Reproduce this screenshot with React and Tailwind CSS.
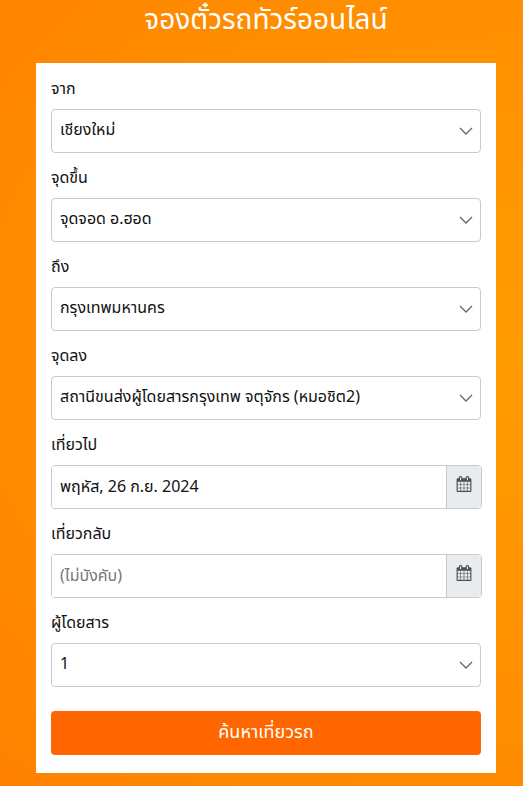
import { useState } from "react";

const CALENDAR_PATH =
  "M192 1664h288v-288h-288v288zm352 0h320v-288h-320v288zm-352-352h288v-320h-288v320zm352 0h320v-320h-320v320zm-352-384h288v-288h-288v288zm736 736h320v-288h-320v288zm-384-736h320v-288h-320v288zm768 736h288v-288h-288v288zm-384-352h320v-320h-320v320zm-352-864v-288q0-13-9.5-22.5t-22.5-9.5h-64q-13 0-22.5 9.5t-9.5 22.5v288q0 13 9.5 22.5t22.5 9.5h64q13 0 22.5-9.5t9.5-22.5zm736 864h288v-320h-288v320zm-384-384h320v-288h-320v288zm384 0h288v-288h-288v288zm32-480v-288q0-13-9.5-22.5t-22.5-9.5h-64q-13 0-22.5 9.5t-9.5 22.5v288q0 13 9.5 22.5t22.5 9.5h64q13 0 22.5-9.5t9.5-22.5zm384-64v1280q0 52-38 90t-90 38h-1408q-52 0-90-38t-38-90v-1280q0-52 38-90t90-38h128v-96q0-66 47-113t113-47h64q66 0 113 47t47 113v96h384v-96q0-66 47-113t113-47h64q66 0 113 47t47 113v96h128q52 0 90 38t38 90z";

const Field = ({ id, label, children }) => (
  <div>
    <label htmlFor={id} className="block text-base leading-6 mb-2">
      {label}
    </label>
    {children}
  </div>
);

const SelectField = ({ id, label, options }) => (
  <Field id={id} label={label}>
    <div className="grid items-center">
      <select
        id={id}
        className="col-start-1 row-start-1 w-full h-11 appearance-none rounded border border-[#c8cacc] bg-white pl-2 pr-8 pb-0.5 text-base"
      >
        {options.map((option) => (
          <option key={option}>{option}</option>
        ))}
      </select>
      <svg
        viewBox="0 0 14 8"
        className="col-start-1 row-start-1 justify-self-end mr-2 w-3.5 h-2 pointer-events-none"
        fill="none"
        stroke="#666"
        strokeWidth="1.3"
      >
        <path d="M1 1l6 6 6-6" />
      </svg>
    </div>
  </Field>
);

const DateField = ({ id, label, initial, placeholder }) => {
  const [value, setValue] = useState(initial);

  return (
    <Field id={id} label={label}>
      <div className="-mr-px flex h-11 rounded border border-[#c8cacc] overflow-hidden">
        <input
          id={id}
          type="text"
          value={value}
          placeholder={placeholder}
          onChange={(e) => setValue(e.target.value)}
          className="min-w-0 flex-1 bg-white px-2 text-base placeholder:text-[#737980]"
        />
        <button
          type="button"
          aria-label={`เลือก${label}`}
          className="flex w-[35px] justify-center border-l border-[#c8cacc] bg-[#e9ecef] pt-2.5"
        >
          <svg viewBox="0 0 1792 1792" className="w-4 h-4" fill="#495057">
            <path d={CALENDAR_PATH} />
          </svg>
        </button>
      </div>
    </Field>
  );
};

const App = () => {
  return (
    <main className="min-h-screen bg-[radial-gradient(ellipse_at_100%_45%,#ff9c00_0%,#ff8e00_60%,#ff8200_100%)] pl-9 pr-[27px] pb-3 font-['Noto_Sans_Thai','Noto_Sans',sans-serif] text-[#111]">
      <h1 className="h-[63px] text-center text-[28px] leading-[42px] text-white">
        จองตั๋วรถทัวร์ออนไลน์
      </h1>
      <form
        className="bg-white px-[15px] pt-3.5 pb-[18px]"
        onSubmit={(e) => e.preventDefault()}
      >
        <div className="flex flex-col gap-[13px]">
          <SelectField id="from" label="จาก" options={["เชียงใหม่"]} />
          <SelectField id="pickup" label="จุดขึ้น" options={["จุดจอด อ.ฮอด"]} />
          <SelectField id="to" label="ถึง" options={["กรุงเทพมหานคร"]} />
          <SelectField
            id="dropoff"
            label="จุดลง"
            options={["สถานีขนส่งผู้โดยสารกรุงเทพ จตุจักร (หมอชิต2)"]}
          />
          <DateField id="depart" label="เที่ยวไป" initial="พฤหัส, 26 ก.ย. 2024" />
          <DateField id="return" label="เที่ยวกลับ" initial="" placeholder="(ไม่บังคับ)" />
          <SelectField id="passengers" label="ผู้โดยสาร" options={["1", "2", "3", "4"]} />
        </div>
        <button
          type="submit"
          className="mt-6 h-11 w-full rounded bg-[#ff6600] text-lg text-white"
        >
          ค้นหาเที่ยวรถ
        </button>
      </form>
    </main>
  );
};

export default App;
